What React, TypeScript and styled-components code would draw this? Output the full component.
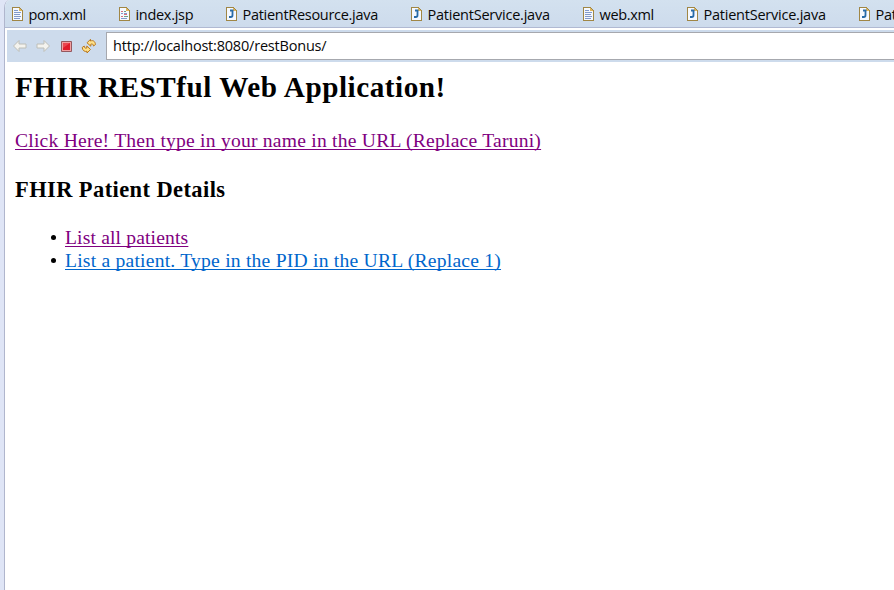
import React from 'react';
import styled, { createGlobalStyle } from 'styled-components';

const GlobalStyle = createGlobalStyle`
  * { box-sizing: border-box; }
  body { margin: 0; background: #fff; overflow: hidden; }
`;

const Workbench = styled.div`
  display: flex;
  height: 590px;
  width: 100%;
  overflow: hidden;
  background: #dfe5f6;
  padding-left: 4px;
`;

const EditorArea = styled.div`
  flex: 1;
  min-width: 0;
  display: flex;
  flex-direction: column;
  background: #fff;
  border-left: 1px solid #b0b6cd;
  border-top-left-radius: 6px 8px;
  overflow: hidden;
`;

const TabBar = styled.div`
  flex: none;
  height: 28px;
  display: grid;
  grid-template-columns: 107px 107px 185px 172px 104px 172px 172px;
  padding-left: 7px;
  background: linear-gradient(#d3e1ef, #cddbec);
  border-bottom: 1px solid #b0b9d2;
`;

const Tab = styled.div`
  display: flex;
  align-items: flex-start;
  padding-top: 7px;
`;

const UiText = styled.span<{ $spacing: number }>`
  font: 14.5px/20px "Open Sans", "Noto Sans", sans-serif;
  letter-spacing: ${(p) => p.$spacing}px;
  color: #080808;
  white-space: nowrap;
`;

const TabLabel = styled(UiText)`
  margin: -2px 0 0 5.5px;
`;

const Toolbar = styled.div`
  flex: none;
  display: flex;
  height: 32px;
  margin: 2px 0 0 2px;
  padding-top: 2px;
  background: #cddbec;
`;

const ToolButtons = styled.div`
  flex: none;
  width: 99px;
  padding: 5px 0 0 5px;
  display: flex;
  gap: 7px;
  svg { display: block; flex: none; }
`;

const AddressField = styled.div`
  flex: 1;
  height: 28px;
  padding: 3px 6px;
  background: #fff;
  border: 1px solid #a6a8ae;
  border-right: 0;
`;

const Page = styled.main`
  flex: 1;
  padding: 8px 10px;
  color: #000;
  font-family: "Liberation Serif", "Times New Roman", serif;
  font-size: 19.6px;
  line-height: 23px;
`;

const Title = styled.h2`
  margin: 0;
  font-size: 29.2px;
  line-height: 34px;
  letter-spacing: 0.53px;
  white-space: nowrap;
`;

const Subtitle = styled.h3`
  margin: 24px 0 0;
  font-size: 22.46px;
  line-height: 27px;
  letter-spacing: 0.42px;
`;

const Intro = styled.p`
  margin: 25px 0 0;
`;

const Link = styled.a<{ $visited?: boolean; $spacing: number }>`
  color: ${(p) => (p.$visited ? '#800080' : '#0066cc')};
  letter-spacing: ${(p) => p.$spacing}px;
  text-decoration: underline;
  text-decoration-thickness: 1px;
  text-underline-offset: 2px;
  text-decoration-skip-ink: none;
  white-space: nowrap;
`;

const List = styled.ul`
  margin: 23px 0 0;
  padding: 0 0 0 36px;
  list-style: none;
`;

const ListItem = styled.li`
  display: flex;
  align-items: center;
  gap: 9px;
  &::before {
    content: '';
    width: 5px;
    height: 5px;
    border-radius: 50%;
    background: #000;
  }
`;

type Kind = 'xml' | 'jsp' | 'java';

function FileIcon({ kind }: { kind: Kind }) {
  return (
    <svg width="11" height="14" viewBox="0 0 11 14" shapeRendering="crispEdges">
      <path d="M.5.5h7l3 3v10H.5z" fill="#f5f9ff" stroke="#a08645" />
      <path d="M7 1h1v1h1v1h1v1H7z" fill="#dfb65c" />
      {kind === 'xml' && (
        <path d="M2 3.5h4M2 5.5h7M2 7.5h6M2 9.5h7M2 11.5h6" stroke="#8299cb" fill="none" />
      )}
      {kind === 'jsp' && (
        <>
          <path d="M2 4.5h2M5 7.5h3M2 9.5h2" stroke="#d8707f" />
          <path d="M5 4.5h2M5 9.5h4" stroke="#6da18c" />
          <path d="M2 6.5h2M5 6.5h3M2 11.5h6" stroke="#8299cb" />
        </>
      )}
      {kind === 'java' && (
        <path d="M4 3.5h3.5M6.5 3v5.3Q6.5 10 4.8 10H3" stroke="#286ba8" strokeWidth="1.8" fill="none" shapeRendering="auto" />
      )}
    </svg>
  );
}

function BackIcon() {
  return (
    <svg width="16" height="18" viewBox="0 0 16 18">
      <path d="M1.5 9 7 3.5V7h7v4H7v3.5z" fill="#f4f3ee" stroke="#bdbeb8" />
    </svg>
  );
}

function ForwardIcon() {
  return (
    <svg width="16" height="18" viewBox="0 0 16 18">
      <path d="M14.5 9 9 3.5V7H2v4h7v3.5z" fill="#f4f3ee" stroke="#bdbeb8" />
    </svg>
  );
}

function StopIcon() {
  return (
    <svg width="16" height="18" viewBox="0 0 16 18">
      <path d="M3.5 4.5h10v10h-10z" fill="#f3a0a2" stroke="#94585f" />
      <path d="M5 6h7v7H5z" fill="#e01b2b" />
      <path d="M5 6h7l-7 5z" fill="#ea4650" />
    </svg>
  );
}

function RefreshIcon() {
  return (
    <svg width="16" height="18" viewBox="0 0 16 18">
      <g fill="#ffe188" stroke="#b9781f" strokeWidth="1" strokeLinejoin="round">
        <path d="M6 5.8 9.5 2.3V4C12 3 14 4 14.5 7.5L12.5 9C12.3 7 11.3 6.6 9.8 7.2V9.2z" />
        <path d="M9.5 12.5 6 16v-1.7C3.5 15 1.5 13.5 1.2 10.5L3.2 9C3.4 11 4.4 11.6 5.8 11V9z" />
      </g>
    </svg>
  );
}

const tabs: { kind: Kind; name: string; spacing: number }[] = [
  { kind: 'xml', name: 'pom.xml', spacing: -0.3 },
  { kind: 'jsp', name: 'index.jsp', spacing: -0.3 },
  { kind: 'java', name: 'PatientResource.java', spacing: -0.29 },
  { kind: 'java', name: 'PatientService.java', spacing: -0.23 },
  { kind: 'xml', name: 'web.xml', spacing: -0.35 },
  { kind: 'java', name: 'PatientService.java', spacing: -0.23 },
  { kind: 'java', name: 'PatientResource.java', spacing: -0.29 },
];

export default function App() {
  return (
    <>
      <GlobalStyle />
      <Workbench>
        <EditorArea>
          <TabBar>
            {tabs.map((tab, i) => (
              <Tab key={i}>
                <FileIcon kind={tab.kind} />
                <TabLabel $spacing={tab.spacing}>{tab.name}</TabLabel>
              </Tab>
            ))}
          </TabBar>
          <Toolbar>
            <ToolButtons>
              <BackIcon />
              <ForwardIcon />
              <StopIcon />
              <RefreshIcon />
            </ToolButtons>
            <AddressField>
              <UiText $spacing={-0.2}>http://localhost:8080/restBonus/</UiText>
            </AddressField>
          </Toolbar>
          <Page>
            <Title>FHIR RESTful Web Application!</Title>
            <Intro>
              <Link $visited $spacing={0.22}>Click Here! Then type in your name in the URL (Replace Taruni)</Link>
            </Intro>
            <Subtitle>FHIR Patient Details</Subtitle>
            <List>
              <ListItem><Link $visited $spacing={0.15}>List all patients</Link></ListItem>
              <ListItem><Link $spacing={0.22}>List a patient. Type in the PID in the URL (Replace 1)</Link></ListItem>
            </List>
          </Page>
        </EditorArea>
      </Workbench>
    </>
  );
}
